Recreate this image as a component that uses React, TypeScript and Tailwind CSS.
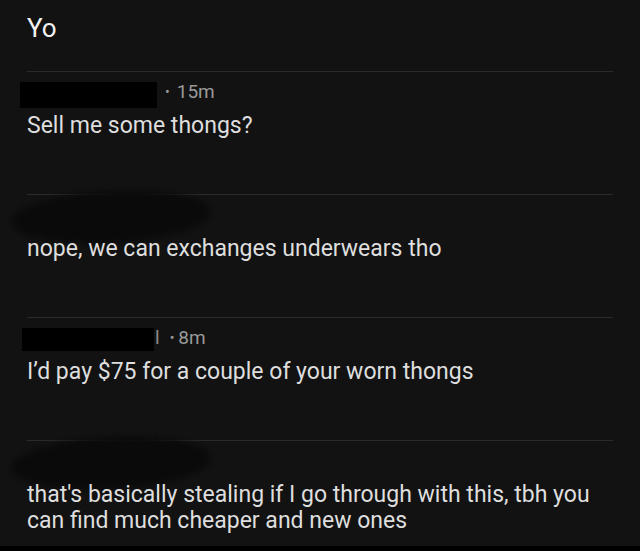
import React from 'react';

type Comment = {
  id: number;
  redact: 'box' | 'blob';
  boxW?: number;
  boxH?: number;
  boxMl?: number;
  prefix?: string;
  time?: string;
  text: string;
};

const comments: Comment[] = [
  { id: 1, redact: 'box', boxW: 137, boxH: 26, boxMl: -7, time: '15m', text: 'Sell me some thongs?' },
  { id: 2, redact: 'blob', text: 'nope, we can exchanges underwears tho' },
  { id: 3, redact: 'box', boxW: 132, boxH: 23, boxMl: -5, prefix: 'l', time: '8m', text: 'I\u2019d pay $75 for a couple of your worn thongs' },
  {
    id: 4,
    redact: 'blob',
    text: "that's basically stealing if I go through with this, tbh you can find much cheaper and new ones",
  },
];

const CommentRow = ({ c, last }: { c: Comment; last: boolean }) => {
  return (
    <div className={`relative border-t border-[#2a2a2a] pt-[10px] ${last ? 'pb-[12px]' : 'pb-[55px]'}`}>
      {c.redact === 'blob' && (
        <div className="absolute left-[-16px] top-[-4px] w-[200px] h-[52px] rounded-[50%] bg-[#0a0a0a] blur-[3px] -rotate-3" />
      )}
      <div className="relative flex items-start h-[26px]">
        {c.redact === 'box' && (
          <>
            <div className="bg-black" style={{ width: c.boxW, height: c.boxH, marginLeft: c.boxMl }} />
            <div className="flex items-center text-[19px] leading-[20px] text-[#9a9a9a]">
              {c.prefix && <span className="ml-[1px] text-[#8a8a8a]">{c.prefix}</span>}
              <span className={`${c.prefix ? 'ml-[10px]' : 'ml-[8px]'} text-[14px]`}>•</span>
              <span className={c.prefix ? 'ml-[4px]' : 'ml-[7px]'}>{c.time}</span>
            </div>
          </>
        )}
      </div>
      <p className="relative mt-[5px] text-[23px] leading-[26px] text-[#dedede]">{c.text}</p>
    </div>
  );
};

export default function App() {
  return (
    <div
      className="w-[640px] h-[551px] overflow-hidden bg-[#121212] flex flex-col"
      style={{ fontFamily: 'Roboto, "Noto Sans", sans-serif' }}
    >
      <div className="px-[27px]">
        <h1 className="pt-[12px] text-[26px] leading-[32px] text-[#f2f2f2] h-[71px]">Yo</h1>
        {comments.map((c, i) => (
          <CommentRow key={c.id} c={c} last={i === comments.length - 1} />
        ))}
      </div>
      <div className="flex-1 bg-black" />
    </div>
  );
}
